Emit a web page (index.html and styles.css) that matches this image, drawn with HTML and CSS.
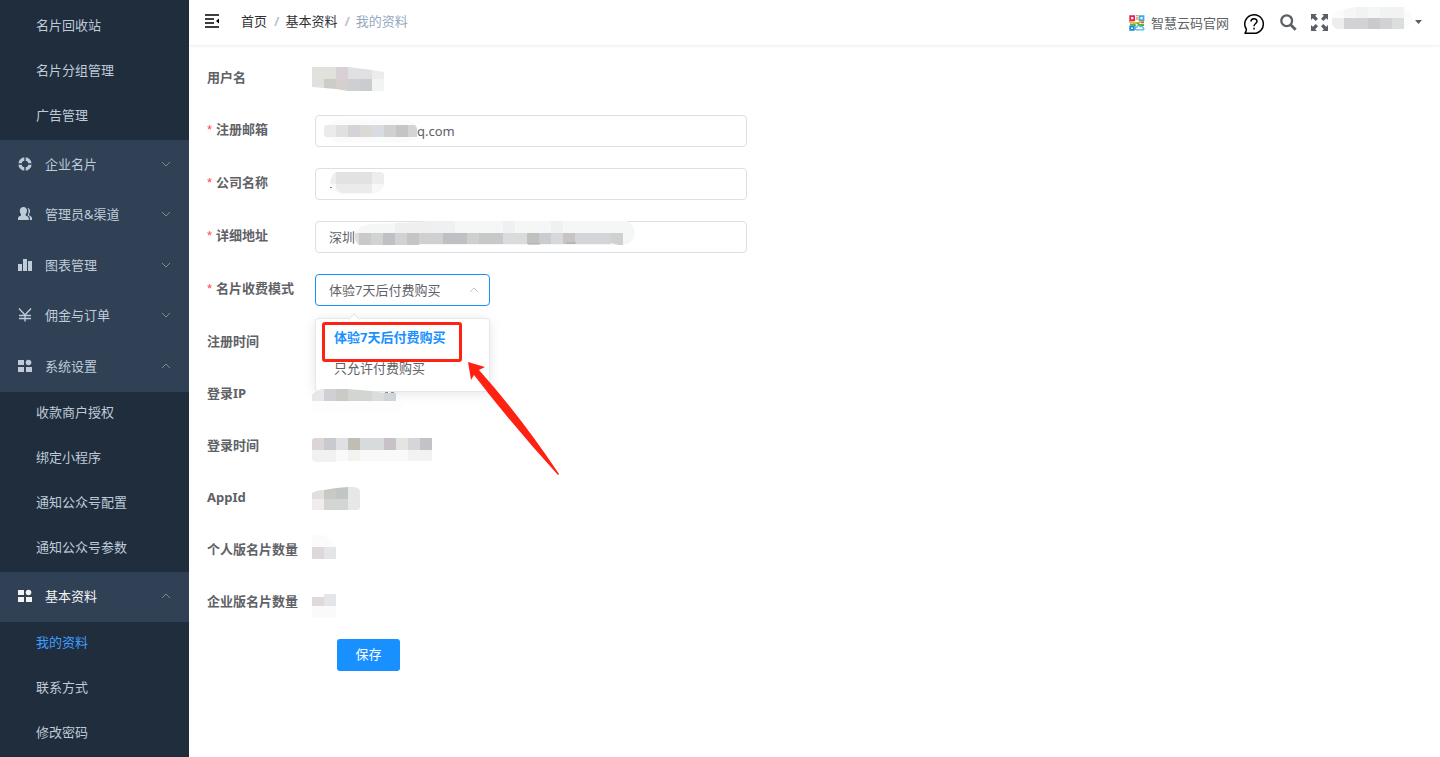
FILE: index.html
```html
<!DOCTYPE html>
<html lang="zh-CN">
<head>
<meta charset="utf-8">
<title>我的资料</title>
<link rel="stylesheet" href="styles.css">
</head>
<body>
<svg class="defs" aria-hidden="true">
  <symbol id="down" viewBox="0 0 10 6"><path d="M1 1l4 4 4-4" fill="none" stroke="currentColor"/></symbol>
  <symbol id="up" viewBox="0 0 10 6"><path d="M1 5l4-4 4 4" fill="none" stroke="currentColor"/></symbol>
  <symbol id="tiles" viewBox="0 0 14 14"><path d="M0 1h6v5H0zM0 8h6v5H0zM8 8h6v5H8z" fill="currentColor"/><circle cx="10.5" cy="3.5" r="2.8" fill="currentColor"/></symbol>
</svg>
<div class="app">
  <nav class="sidebar">
    <ul class="sub first">
      <li><a href="#">名片回收站</a></li>
      <li><a href="#">名片分组管理</a></li>
      <li><a href="#">广告管理</a></li>
    </ul>
    <div class="group">
      <button class="item" type="button"><svg class="ico" viewBox="0 0 14 14"><circle cx="7" cy="7" r="5" fill="none" stroke="currentColor" stroke-width="3.4"/><path d="M7 0v4M7 10v4M0 7h4M10 7h4" stroke="#304156" stroke-width="1.4"/></svg><span>企业名片</span><svg class="chev"><use href="#down"/></svg></button>
      <button class="item" type="button"><svg class="ico" viewBox="0 0 14 14"><path d="M5.500 0C7.600 0 9 1.500 9 3.700c0 1.500-.5 2.700-1.300 3.400v1.300c1.500.8 3 1.300 3 2.600v2H0v-2c0-1.300 1.500-1.800 3-2.600V7.100C2.300 6.400 1.800 5.200 1.800 3.700 1.800 1.500 3.300 0 5.500 0z" fill="currentColor"/><path d="M9.500 1c1.700.2 2.600 1.500 2.600 3 0 1.200-.4 2.200-1 2.900v1.300c1.500.9 2.900 1.500 2.900 2.700V13h-2.200v-2.300c0-1.500-1.500-2-2.300-2.500.8-1 1-2.500 1-4 0-1.200-.3-2.300-1-3.200z" fill="currentColor"/></svg><span>管理员&amp;渠道</span><svg class="chev"><use href="#down"/></svg></button>
      <button class="item" type="button"><svg class="ico" viewBox="0 0 14 14"><path d="M0 6h4v7H0zM5 1h4v12H5zM10 3h4v10h-4z" fill="currentColor"/></svg><span>图表管理</span><svg class="chev"><use href="#down"/></svg></button>
      <button class="item" type="button"><svg class="ico" viewBox="0 0 14 14"><path d="M1 .5l6 6.500 6-6.500M7 7v6.500M1 7.500h12M1 10.500h12" fill="none" stroke="currentColor" stroke-width="1.400"/></svg><span>佣金与订单</span><svg class="chev"><use href="#down"/></svg></button>
      <button class="item" type="button"><svg class="ico"><use href="#tiles"/></svg><span>系统设置</span><svg class="chev"><use href="#up"/></svg></button>
    </div>
    <ul class="sub">
      <li><a href="#">收款商户授权</a></li>
      <li><a href="#">绑定小程序</a></li>
      <li><a href="#">通知公众号配置</a></li>
      <li><a href="#">通知公众号参数</a></li>
    </ul>
    <div class="group">
      <button class="item open" type="button"><svg class="ico"><use href="#tiles"/></svg><span>基本资料</span><svg class="chev"><use href="#up"/></svg></button>
    </div>
    <ul class="sub">
      <li><a class="active" href="#">我的资料</a></li>
      <li><a href="#">联系方式</a></li>
      <li><a href="#">修改密码</a></li>
    </ul>
  </nav>
  <div class="page">
    <header class="topbar">
      <button class="plain fold" type="button" aria-label="折叠菜单"><svg width="14" height="14" viewBox="0 0 14 14"><path d="M0 1h14M0 5h9M0 9h9M0 13h14" stroke="#000" stroke-width="1.400"/><path d="M14 4.500v5L11 7z"/></svg></button>
      <nav class="crumbs"><a href="#">首页</a><b>/</b><a href="#">基本资料</a><b>/</b><span>我的资料</span></nav>
      <div class="tools">
        <a class="site" href="#"><svg width="16" height="16" viewBox="0 0 16 16" fill="none"><path d="M1.200 1.200h4v4h-4z" stroke="#e8205c" stroke-width="1.800"/><path d="M10.500 1.200h4v4h-4z" stroke="#3fa9e8" stroke-width="1.800"/><path d="M7 .5h2M8 2v3" stroke="#f0982c" stroke-width="1.500"/><path d="M0 7h4l2 1h3l2-1h4" stroke="#f5b92c" stroke-width="1.800"/><path d="M1 9.500h4l2 1.500M8 8l3 2h4" stroke="#4cb648" stroke-width="1.800"/><path d="M1.200 11.500h3.600v3.300H1.200z" stroke="#1f86d8" stroke-width="1.800"/><path d="M7.500 14.800c-2-.5-1.500-2.700.3-2.600.5-2 3-1.800 3.500-.4 1.500-.8 3 0 2.800 1.200 1.300.4 1 1.800-.2 1.800z" stroke="#45b4ec" stroke-width="1.300"/><path d="M12 7.500h3" stroke="#e8532c" stroke-width="1.500"/></svg><span>智慧云码官网</span></a>
        <button class="plain help" type="button" aria-label="帮助"><svg width="22" height="22" viewBox="0 0 22 22" fill="none" stroke="#000" stroke-width="1.500"><path d="M2 20.300h9A9.300 9.300 0 1 0 3.200 16c.6.900.1 2-1.200 4.300z" stroke-linejoin="round"/><path d="M8 8.600c0-3.800 6-3.800 6-.3 0 2.200-3 2.300-3 5"/><path d="M11 14.800v1.700"/></svg></button>
        <button class="plain search" type="button" aria-label="搜索"><svg width="17" height="17" viewBox="0 0 17 17" fill="none" stroke="#5a5e66"><circle cx="6.700" cy="6.700" r="5.400" stroke-width="2.300"/><path d="M10.700 10.700l5 5" stroke-width="2.800"/></svg></button>
        <button class="plain full" type="button" aria-label="全屏"><svg width="17" height="17" viewBox="0 0 17 17"><path d="M0 0h6L4.200 1.800 7 4.700 4.700 7 1.800 4.200 0 6zM17 0h-6l1.800 1.800L10 4.700 12.300 7l2.900-2.800L17 6zM0 17h6l-1.800-1.800L7 12.300 4.700 10l-2.900 2.800L0 11zM17 17h-6l1.800-1.800-2.800-2.900 2.300-2.300 2.900 2.800L17 11z" fill="#5a5e66"/></svg></button>
        <button class="plain user" type="button" aria-label="账户"><svg class="name" width="80" height="24" viewBox="0 0 80 24"><path d="M0 13Q0 5 14 2L30 0H66Q80 2 80 12 79 21 70 22H5Q0 20 0 13z" fill="#fbfbfb"/><path d="M12 2l12-2h48v11H12z" fill="#f5f6f6"/><path d="M24 0h12v11H24zM48 0h24v11H48z" fill="#f1f3f3"/><path d="M0 11h12v11H5Q0 20 0 15z" fill="#ededee"/><path d="M12 11h60v11H12z" fill="#d2d2d4"/><path d="M36 11h12v11H36z" fill="#cacacc"/><path d="M60 11h12v11H60z" fill="#dcdddd"/></svg><svg width="7" height="4" viewBox="0 0 7 4"><path d="M0 0h7L3.500 4z" fill="#5a5e66"/></svg></button>
      </div>
    </header>
    <main>
      <form class="form">
        <div class="row"><span class="label">用户名</span>
          <svg class="mask" width="72" height="24" viewBox="0 0 72 24"><path d="M0 0h24v12H0z" fill="#e2e2dc"/><path d="M24 0h12v12H24z" fill="#d8d0d6"/><path d="M36 0l24 3v9H36z" fill="#e0e0e3"/><path d="M60 3l12 2v7H60z" fill="#ececee"/><path d="M0 12h12v9L0 20z" fill="#e0e1de"/><path d="M12 12h12v10l-12-1z" fill="#cdccc7"/><path d="M24 12h12v12l-12-2z" fill="#d5cfcd"/><path d="M36 12h12v12H36z" fill="#cdcfd2"/><path d="M48 12h12v12H48z" fill="#c9cdcf"/><path d="M60 12h12v12H60z" fill="#f2f4f4"/></svg></div>
        <div class="row field"><label class="label required" for="mail">注册邮箱</label>
          <div class="control"><input class="mail" id="mail" type="text" value="q.com"><svg class="cover mail-cover" width="94" height="24" viewBox="0 0 94 24"><path d="M0 12Q4 1 20 0h55q16 1 18 8v12q-8 4-18 4H20Q4 23 0 16z" fill="#fbfbfb"/><path d="M3 6h9v12H3Q0 18 0 15V9Q0 6 3 6z" fill="#ebebed"/><path d="M12 6h12v12H12z" fill="#e0e0e0"/><path d="M24 6h12v12H24z" fill="#d3d3d8"/><path d="M36 6h12v12H36z" fill="#dcd8d6"/><path d="M48 6h12v12H48z" fill="#d8dce2"/><path d="M60 6h12v12H60z" fill="#d0d0d2"/><path d="M72 6h12v12H72z" fill="#c5c5c6"/><path d="M84 6h7l2 3v9h-9z" fill="#d3d4d4"/></svg></div></div>
        <div class="row field"><label class="label required" for="company">公司名称</label>
          <div class="control"><input id="company" type="text"><svg class="cover company-cover" width="54" height="22" viewBox="0 0 54 22"><path d="M0 15h2v1H0z" fill="#777"/><path d="M0 11Q1 1 8 0h42q4 1 4 4v10q-3 7-12 8H12Q2 20 0 11z" fill="#f8f8f8"/><path d="M0 11Q2 1 6 0v12H1z" fill="#eee"/><path d="M6 0h36v12H6z" fill="#e2e2e2"/><path d="M42 0h9q3 1 3 3v9H42z" fill="#ecedee"/><path d="M6 12h36v9H12q-6-2-6-5z" fill="#ebebeb"/></svg></div></div>
        <div class="row field"><label class="label required" for="address">详细地址</label>
          <div class="control"><input id="address" type="text" value="深圳"><svg class="cover address-cover" width="280" height="26" viewBox="0 0 280 26"><path d="M0 14Q4 3 16 3L50 2 76 0H272Q280 4 280 12 278 23 268 24H8Q1 22 0 17z" fill="#f5f6f6"/><path d="M76 0h24v12H76zM148 0h12v12h-12zM196 0h12v12h-12z" fill="#eff0f1"/><path d="M40 2l36-1v11H40z" fill="#efefef"/><path d="M0 12h4v12Q0 21 0 16z" fill="#ddd"/><path d="M4 12h12v12H4z" fill="#c9c9ca"/><path d="M16 12h12v12H16z" fill="#d0d3d0"/><path d="M28 12h12v12H28z" fill="#bfc0c4"/><path d="M40 12h12v12H40z" fill="#d2d2d3"/><path d="M52 12h12v12H52z" fill="#c4c6c6"/><path d="M64 12h24v11H64z" fill="#d0d0d1"/><path d="M88 12h24v11H88z" fill="#bec0c4"/><path d="M112 12h12v11h-12z" fill="#cfcfd0"/><path d="M124 12h12v11h-12z" fill="#c7c9c9"/><path d="M136 12h12v11h-12z" fill="#c6c8cb"/><path d="M148 12h24v11h-24z" fill="#dadbdd"/><path d="M172 12h12v11h-12z" fill="#c0c0bc"/><path d="M184 12h12v11h-12z" fill="#cacccf"/><path d="M196 12h12v11h-12z" fill="#d5d8dd"/><path d="M208 12h12v11h-12z" fill="#c6c5c3"/><path d="M220 12h36v11h-36z" fill="#d4d5d8"/><path d="M256 12h12v12h-4l-8-2z" fill="#d0d0d0"/><path d="M173 23h12M211 22h10" stroke="#aaa"/></svg></div></div>
        <div class="row field"><label class="label required" for="mode">名片收费模式</label>
          <div class="control short"><select id="mode"><option selected>体验7天后付费购买</option><option>只允许付费购买</option></select><svg class="arrow"><use href="#up"/></svg>
            <ul class="menu" role="listbox" aria-label="名片收费模式">
              <li class="picked" role="option" aria-selected="true">体验7天后付费购买</li>
              <li role="option" aria-selected="false">只允许付费购买</li>
            </ul>
            <div class="mark"></div>
            <svg class="pointer" width="92" height="114" viewBox="0 0 92 114"><path d="M0 0l17 5-6 3q42 47 80 104l-1 1Q46 65 6 13l-3 5z" fill="#ff2213"/></svg>
          </div></div>
        <div class="row"><span class="label">注册时间</span></div>
        <div class="row"><span class="label">登录IP</span>
          <svg class="mask high front" width="92" height="34" viewBox="0 -8 92 34"><path d="M0 14h84l8 4v4l-8 3H10Q0 24 0 20z" fill="#fdfdfd"/><path d="M0 14V8q5-6 12-6v12z" fill="#e7e7e9"/><path d="M12 2h12v12H12z" fill="#d0cfd4"/><path d="M24 2h12v12H24z" fill="#cbcac7"/><path d="M36 2l24 2v10H36z" fill="#d3d5d3"/><path d="M60 4l12 2v8H60z" fill="#dbdddb"/><path d="M72 6h12v8H72z" fill="#d0d4d7"/><path d="M73 5.500h3M79 5.500h3" stroke="#8c9093"/></svg></div>
        <div class="row"><span class="label">登录时间</span>
          <svg class="mask low" width="120" height="24" viewBox="0 0 120 24"><path d="M0 12h120v11H24v1H4Q0 23 0 20z" fill="#f9f9f9"/><path d="M0 12h24v12H4Q0 23 0 20z" fill="#f1f1f1"/><path d="M36 12h12v11H36zM96 12h24v11H96z" fill="#f2f2f1"/><path d="M3 0h9v12H0V3Q0 0 3 0z" fill="#dbd5d6"/><path d="M12 0h12v12H12z" fill="#c9cad0"/><path d="M24 0h12v12H24z" fill="#dfdfe4"/><path d="M36 0h12v12H36z" fill="#c0bdb5"/><path d="M48 0h24v12H48z" fill="#d8dbdb"/><path d="M72 0h12v12H72z" fill="#c9c1c8"/><path d="M84 0h12v12H84z" fill="#e3e5e2"/><path d="M96 0h12v12H96z" fill="#d6d5d7"/><path d="M108 0h12v12h-12z" fill="#c4c2c7"/></svg></div>
        <div class="row"><span class="label">AppId</span>
          <svg class="mask" width="48" height="24" viewBox="0 0 48 24"><path d="M0 12V6q5-3 12-3v9z" fill="#dfdfdf"/><path d="M12 3l12-2v11H12z" fill="#c9c8c5"/><path d="M24 1l12-1v12H24z" fill="#c0c5c6"/><path d="M36 0h6q6 1 6 4v16q0 3-3 3h-9z" fill="#e7e7ea"/><path d="M0 12h12v11H0z" fill="#f0ecee"/><path d="M12 12h24v11H12z" fill="#d3d5d3"/></svg></div>
        <div class="row"><span class="label">个人版名片数量</span>
          <svg class="mask high" width="24" height="24" viewBox="0 0 24 24"><path d="M0 0h12l12 12H0z" fill="#fbfbfb"/><path d="M0 12h12v12H0z" fill="#ded8da"/><path d="M12 12h12v12H12z" fill="#e4e5e9"/></svg></div>
        <div class="row"><span class="label">企业版名片数量</span>
          <svg class="mask low" width="24" height="24" viewBox="0 0 24 24"><path d="M0 12h24v12H0z" fill="#fafafa"/><path d="M0 3h12v9H0z" fill="#dfd9da"/><path d="M12 0h12v12H12z" fill="#e4e5e9"/></svg></div>
        <button class="save" type="button">保存</button>
      </form>
    </main>
  </div>
</div>
</body>
</html>
```
FILE: styles.css
```css
* { box-sizing: border-box; }
body {
  margin: 0;
  background: #fff;
  color: #606266;
  font: 13px/20px "Noto Sans", "Noto Sans CJK SC", sans-serif;
}
svg { display: block; flex: none; }
.defs { position: absolute; width: 0; height: 0; }
button, input, select { font: inherit; color: inherit; }
a { color: inherit; text-decoration: none; }
ul { margin: 0; padding: 0; list-style: none; }

.app { display: flex; min-height: 100vh; }
.sidebar { flex: none; width: 189px; background: #1f2d3d; color: #bfcbd9; }
.sub.first { padding-top: 5px; }
.sub a { display: flex; align-items: center; height: 45px; padding: 0 0 5px 36px; }
.sub .active { color: #409eff; }
.group { background: #304156; }
.item {
  display: flex;
  align-items: center;
  width: 100%;
  height: 50px;
  padding: 0 18px 2px;
  border: 0;
  background: none;
  text-align: left;
}
.item:nth-child(even) { margin-bottom: 1px; }
.item span { flex: 1; padding-left: 13px; }
.item.open { color: #f4f4f5; }
.ico { width: 14px; height: 14px; }
.chev { width: 10px; height: 6px; color: #7d8a98; }

.page { flex: 1; min-width: 0; }
.topbar {
  display: flex;
  align-items: center;
  height: 45px;
  padding: 0 18px 2px 16px;
  box-shadow: 0 1px 3px rgba(0, 21, 41, .08);
}
.plain { display: flex; align-items: center; padding: 0; border: 0; background: none; }
.fold { padding-bottom: 2px; }
.crumbs { display: flex; padding: 0 0 2px 22px; color: #97a8be; }
.crumbs a { color: #303133; }
.crumbs b { padding: 0 6px 0 7px; color: #c0c4cc; }
.tools { display: flex; align-items: center; margin-left: auto; padding-top: 1px; }
.site { display: flex; align-items: center; gap: 6px; padding-top: 1px; }
.help { padding: 4px 0 0 14px; }
.search { padding-left: 15px; }
.full { padding-left: 14px; }
.user { gap: 3px; padding-left: 4px; }
.name { margin-bottom: 6px; }

.form { display: flex; flex-direction: column; align-items: flex-start; gap: 21px; padding: 18px; }
.row { display: flex; align-items: center; width: 100%; height: 31px; }
.row.field { height: 32px; }
.label { flex: none; width: 105px; padding-bottom: 3px; font-weight: 700; }
.field .label { width: 108px; }
.required::before {
  content: "*";
  margin-right: 4px;
  color: #ff4949;
  font-family: "Liberation Sans", sans-serif;
  font-weight: 400;
}
.control { position: relative; width: 432px; }
.control.short { width: 175px; }
.control input, .control select {
  display: block;
  width: 100%;
  height: 32px;
  padding: 0 13px 1px;
  border: 1px solid #dcdfe6;
  border-radius: 4px;
  outline: 0;
  background: #fff;
}
.control select { appearance: none; padding-right: 30px; border-color: #1890ff; }
.control .mail { padding-left: 101px; }
.arrow { position: absolute; right: 11px; top: 13px; width: 10px; height: 6px; color: #c0c4cc; }
.cover { position: absolute; }
.mail-cover { left: 9px; top: 4px; }
.company-cover { left: 15px; top: 4px; }
.address-cover { left: 40px; top: 0; }
.menu {
  position: absolute;
  z-index: 1;
  top: 44px;
  left: 0;
  width: 100%;
  padding: 3px 0 7px;
  border: 1px solid #e4e7ed;
  border-radius: 4px;
  background: #fff;
  box-shadow: 0 2px 12px rgba(0, 0, 0, .1);
}
.menu::before {
  content: "";
  position: absolute;
  top: -4px;
  left: 34px;
  width: 7px;
  height: 7px;
  border: 1px solid #e4e7ed;
  border-width: 1px 0 0 1px;
  background: #fff;
  transform: rotate(45deg);
}
.menu li { padding: 0 18px; line-height: 31px; }
.menu .picked { color: #1890ff; font-weight: 700; }
.mark {
  position: absolute;
  z-index: 2;
  left: 7px;
  top: 48px;
  width: 140px;
  height: 40px;
  border: 3px solid #ff2213;
  border-radius: 3px;
}
.pointer { position: absolute; z-index: 3; left: 153px; top: 88px; }
.high { align-self: flex-start; }
.low { align-self: flex-end; }
.front { position: relative; z-index: 2; }
.save {
  width: 63px;
  height: 32px;
  margin-left: 130px;
  padding: 0 0 2px;
  border: 0;
  border-radius: 3px;
  background: #1890ff;
  color: #fff;
}
```
